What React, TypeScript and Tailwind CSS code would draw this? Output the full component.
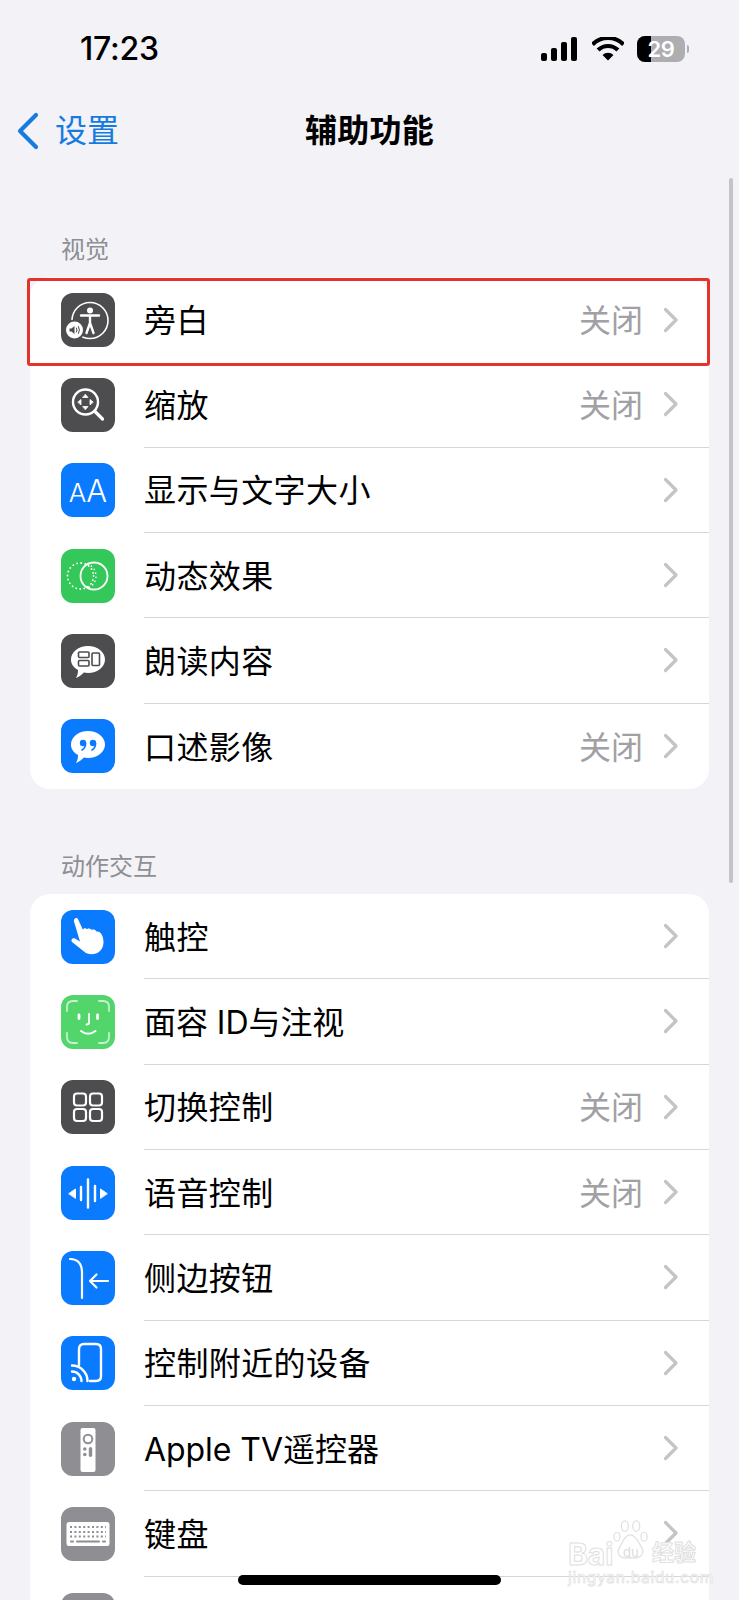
import type { ReactNode } from "react";

const cjk = "font-['Inter','Noto_Sans_CJK_SC',sans-serif]";

function Glyph({ children, bg }: { children: ReactNode; bg: string }) {
	return (
		<div className={`w-[54px] h-[54px] rounded-[12px] shrink-0 flex items-center justify-center ${bg}`}>
			{children}
		</div>
	);
}

function Svg({ children }: { children: ReactNode }) {
	return (
		<svg width="54" height="54" viewBox="0 0 54 54" fill="none" stroke="white" strokeLinecap="round" strokeLinejoin="round">
			{children}
		</svg>
	);
}

const VoiceOverIcon = () => (
	<Svg>
		<circle cx="29" cy="27.5" r="18" strokeWidth="1.6" />
		<circle cx="29" cy="17.5" r="3" fill="white" stroke="none" />
		<path d="M20 22.5 L38 22.5 M29 23 L29 30 M29 30 L25.5 40 M29 30 L32.5 40" strokeWidth="2.4" />
		<circle cx="13.5" cy="37" r="10.5" fill="#4d4d4f" stroke="none" />
		<circle cx="13.5" cy="37" r="8.5" fill="white" stroke="none" />
		<path d="M8.5 35.5 h2 l3 -2.5 v8 l-3 -2.5 h-2 z" fill="#4d4d4f" stroke="none" />
		<path d="M15.5 35 q1.2 2 0 4 M17.5 33.5 q2 3.5 0 7" stroke="#4d4d4f" strokeWidth="1" />
	</Svg>
);

const ZoomIcon = () => (
	<Svg>
		<circle cx="24.5" cy="24" r="12.5" strokeWidth="2.4" />
		<path d="M34 33.5 L41.5 41" strokeWidth="3.2" />
		<path d="M24.5 16.5 l2.5 3 h-5 z M24.5 31.5 l2.5 -3 h-5 z M17 24 l3 -2.5 v5 z M32 24 l-3 -2.5 v5 z" fill="white" stroke="white" strokeWidth="0.8" />
	</Svg>
);

const MotionIcon = () => (
	<Svg>
		<circle cx="19.5" cy="27" r="13" strokeWidth="1.8" strokeDasharray="0.1 4" />
		<circle cx="33" cy="27" r="13.5" strokeWidth="1.8" />
		<path d="M27 15 A13 13 0 0 1 27 39" strokeWidth="1.6" strokeDasharray="0.1 4" />
	</Svg>
);

const bubble =
	"M27 12 C36.5 12 44 18 44 25.5 C44 33 36.5 39 27 39 C25.5 39 24 38.8 22.8 38.5 C20.5 41 18 43 15 44 C16.5 41.5 17 39 17 36 C12.5 33.5 10 30 10 25.5 C10 18 17.5 12 27 12 Z";

const SpeakIcon = () => (
	<Svg>
		<path d={bubble} fill="white" stroke="none" />
		<rect x="17.5" y="18" width="10.5" height="5.5" rx="1" stroke="#4d4d4f" strokeWidth="1.6" />
		<rect x="17.5" y="26.5" width="10.5" height="5.5" rx="1" stroke="#4d4d4f" strokeWidth="1.6" />
		<rect x="31" y="19" width="7.5" height="12.5" rx="1" stroke="#4d4d4f" strokeWidth="1.6" />
	</Svg>
);

const AudioDescIcon = () => (
	<Svg>
		<path d={bubble} fill="white" stroke="none" />
		<circle cx="22" cy="24" r="3.2" fill="#0a7aff" stroke="none" />
		<circle cx="32" cy="24" r="3.2" fill="#0a7aff" stroke="none" />
		<path d="M24.6 24.5 Q24.5 29 21 31 M34.6 24.5 Q34.5 29 31 31" stroke="#0a7aff" strokeWidth="1.6" />
	</Svg>
);

const TouchIcon = () => (
	<Svg>
		<path
			d="M13.5 9 C15 7.5 16.5 8 17.2 9.5 L22 20 C22 18 25 17.5 26 19.5 C26.5 18 29.5 18 30.5 20 C31.5 19 34.5 19.5 35.5 21.5 C37 21 39.5 22 41 25 C43.5 31 43 37 39 41 C35 45 27 45.5 23 41.5 L11 32 C9.5 30 11.5 27.5 14 28.5 L19 31.5 L13 11.5 C12.8 10.5 13 9.5 13.5 9 Z"
			fill="white"
			stroke="none"
		/>
	</Svg>
);

const FaceIdIcon = () => (
	<Svg>
		<g stroke="#c6f2d0" strokeWidth="1.8">
			<path d="M6 16 V12 Q6 6 12 6 H16 M38 6 H42 Q48 6 48 12 V16 M6 38 V42 Q6 48 12 48 H16 M48 38 V42 Q48 48 42 48 H38" />
		</g>
		<path d="M18 20 V23.5 M36.5 20 V23.5" strokeWidth="2.8" />
		<path d="M28 19 V27.5 Q28 29.5 25.5 29.5" strokeWidth="1.8" />
		<path d="M20 36 Q27 41.5 34.5 36" strokeWidth="2" />
	</Svg>
);

const SwitchIcon = () => (
	<Svg>
		<rect x="13" y="13.5" width="12" height="12" rx="3" strokeWidth="2.2" />
		<rect x="29" y="13.5" width="12" height="12" rx="3" strokeWidth="2.2" />
		<rect x="13" y="29" width="12" height="12" rx="3" strokeWidth="2.2" />
		<rect x="29" y="29" width="12" height="12" rx="3" strokeWidth="2.2" />
	</Svg>
);

const VoiceIcon = () => (
	<Svg>
		<path d="M8 27.5 L14.5 23 V32 Z M46 27.5 L39.5 23 V32 Z" fill="white" stroke="white" strokeWidth="1" />
		<path d="M20 21 V34 M27 13.5 V41.5 M34 20 V35" strokeWidth="2.4" />
	</Svg>
);

const SideButtonIcon = () => (
	<Svg>
		<path d="M9 8 Q21 8 21 22 V47" strokeWidth="2.2" />
		<path d="M47 30 H29 M35.5 23.5 L29 30 L35.5 36.5" strokeWidth="2.2" />
	</Svg>
);

const NearbyIcon = () => (
	<Svg>
		<path d="M18 29 V13 Q18 8 23 8 H35 Q40 8 40 13 V40 Q40 45 35 45 H29" strokeWidth="2.4" />
		<circle cx="13" cy="43" r="2.2" fill="white" stroke="none" />
		<path d="M11 35.5 A9.5 9.5 0 0 1 20.5 45 M11 29.5 A15.5 15.5 0 0 1 26.5 45" strokeWidth="2.4" />
	</Svg>
);

const RemoteIcon = () => (
	<Svg>
		<rect x="19.5" y="6" width="15" height="44" rx="2" fill="white" stroke="none" />
		<circle cx="27" cy="17" r="4.3" stroke="#8e8e93" strokeWidth="2" />
		<circle cx="23.8" cy="27" r="1.8" fill="#8e8e93" stroke="none" />
		<circle cx="23.8" cy="32.5" r="1.8" fill="#8e8e93" stroke="none" />
		<rect x="27.8" y="25" width="3.4" height="10" rx="1.7" fill="#8e8e93" stroke="none" />
	</Svg>
);

const KeyboardIcon = () => (
	<Svg>
		<rect x="5.5" y="15" width="43" height="24" rx="2.5" fill="white" stroke="none" />
		<g stroke="#8e8e93" strokeWidth="2" strokeDasharray="2 2.4" strokeLinecap="butt">
			<path d="M9 20 H45 M9 25 H45 M9 29.5 H45" />
		</g>
		<path d="M10 34.5 H12 M16 34.5 H38 M42 34.5 H44" stroke="#8e8e93" strokeWidth="2" />
	</Svg>
);

type Row = { icon: ReactNode; bg: string; label: string; value?: string; noLine?: boolean; tight?: boolean };

const visual: Row[] = [
	{ icon: <VoiceOverIcon />, bg: "bg-[#4d4d4f]", label: "旁白", value: "关闭", noLine: true },
	{ icon: <ZoomIcon />, bg: "bg-[#4d4d4f]", label: "缩放", value: "关闭" },
	{
		icon: (
			<div className="flex items-baseline text-white font-['Inter',sans-serif] font-light leading-none">
				<span className="text-[26px]">A</span>
				<span className="text-[31px]">A</span>
			</div>
		),
		bg: "bg-[#0a7aff]",
		label: "显示与文字大小",
	},
	{ icon: <MotionIcon />, bg: "bg-[#34c759]", label: "动态效果" },
	{ icon: <SpeakIcon />, bg: "bg-[#4d4d4f]", label: "朗读内容" },
	{ icon: <AudioDescIcon />, bg: "bg-[#0a7aff]", label: "口述影像", value: "关闭", noLine: true },
];

const interaction: Row[] = [
	{ icon: <TouchIcon />, bg: "bg-[#0a7aff]", label: "触控" },
	{ icon: <FaceIdIcon />, bg: "bg-[#52d66b]", label: "面容 ID与注视", tight: true },
	{ icon: <SwitchIcon />, bg: "bg-[#4d4d4f]", label: "切换控制", value: "关闭" },
	{ icon: <VoiceIcon />, bg: "bg-[#0a7aff]", label: "语音控制", value: "关闭" },
	{ icon: <SideButtonIcon />, bg: "bg-[#0a7aff]", label: "侧边按钮" },
	{ icon: <NearbyIcon />, bg: "bg-[#0a7aff]", label: "控制附近的设备" },
	{ icon: <RemoteIcon />, bg: "bg-[#8e8e93]", label: "Apple TV遥控器", tight: true },
	{ icon: <KeyboardIcon />, bg: "bg-[#8e8e93]", label: "键盘" },
];

function Chevron() {
	return (
		<svg width="16" height="26" viewBox="0 0 16 26" fill="none" stroke="#c4c4c7" strokeWidth="3.2" strokeLinecap="round" strokeLinejoin="round">
			<path d="M2.5 2.5 L13 13 L2.5 23.5" />
		</svg>
	);
}

function SettingRow({ row }: { row: Row }) {
	return (
		<div className="h-[85.33px] flex items-center pl-[31px]">
			<Glyph bg={row.bg}>{row.icon}</Glyph>
			<div className={`ml-[29px] flex-1 h-full flex items-center pr-[30px] ${row.noLine ? "" : "border-b border-[#d6d6d8]"}`}>
				<span className={`flex-1 pt-[3px] text-[32px] text-black ${row.tight ? "tracking-[-0.05px]" : "tracking-[0.4px]"}`}>{row.label}</span>
				{row.value && <span className="pt-[3px] text-[32px] text-[#a0a0a5] mr-[20px]">{row.value}</span>}
				<Chevron />
			</div>
		</div>
	);
}

function Section({ title, rows, more }: { title: string; rows: Row[]; more?: boolean }) {
	return (
		<section>
			<h2 className="pl-[61px] h-[34px] text-[24px] leading-[30px] text-[#8e8e93] font-normal">{title}</h2>
			<div className="mt-[8px] mx-[30px] bg-white rounded-[20px] overflow-hidden">
				{rows.map((row) => (
					<SettingRow key={row.label} row={row} />
				))}
				{more && (
					<div className="h-[85.33px] pl-[31px] pt-[16px]">
						<div className="w-[54px] h-[54px] rounded-[12px] bg-[#8e8e93]" />
					</div>
				)}
			</div>
		</section>
	);
}

function StatusIcons() {
	return (
		<div className="flex items-center">
			<svg width="36" height="24" viewBox="0 0 36 24" fill="black">
				<rect x="0" y="16" width="6" height="8" rx="2" />
				<rect x="10" y="11" width="6" height="13" rx="2" />
				<rect x="20" y="5" width="6" height="19" rx="2" />
				<rect x="30" y="0" width="6" height="24" rx="2" />
			</svg>
			<svg className="ml-[15px]" width="32" height="24" viewBox="0 0 32 24" fill="none" stroke="black" strokeWidth="4.2">
				<path d="M0.44 7.44 A22 22 0 0 1 31.56 7.44" />
				<path d="M6.1 13.1 A14 14 0 0 1 25.9 13.1" />
				<path d="M16 23.5 L10.5 18 A7.8 7.8 0 0 1 21.5 18 Z" fill="black" stroke="none" />
			</svg>
			<div className="ml-[13px] relative w-[48px] h-[26px] rounded-[8px] bg-[#aeaeb2] overflow-hidden flex items-center justify-center">
				<div className="absolute left-0 top-0 bottom-0 w-[14px] bg-black" />
				<span className="relative text-white font-semibold text-[22px] leading-none tracking-[-0.5px]">29</span>
			</div>
			<div className="ml-[2px] w-[2px] h-[8px] rounded-r bg-[#aeaeb2]" />
		</div>
	);
}

function Watermark() {
	return (
		<div className="absolute left-[568px] top-[1520px] w-[131px] h-[64px] pointer-events-none">
			<svg className="absolute left-[44px] top-0" width="38" height="42" viewBox="0 0 42 48" fill="white" stroke="#e0e0e2" strokeWidth="1.4">
				<ellipse cx="5" cy="19" rx="3.5" ry="5" />
				<ellipse cx="14" cy="7" rx="4" ry="6" />
				<ellipse cx="27" cy="7" rx="4" ry="6" />
				<ellipse cx="36" cy="19" rx="3.5" ry="5" />
				<path d="M20 17 C27 17 30 27 33 31 C38 40 30 45 20 43 C10 45 3 40 8 31 C11 27 13 17 20 17 Z" />
			</svg>
			<span className="absolute left-0 top-[19px] text-[30px] leading-none font-bold text-white [-webkit-text-stroke:1px_#e0e0e2] font-['Inter',sans-serif]">Bai</span>
			<span className="absolute left-[55px] top-[26px] text-[13px] leading-none text-[#dcdcde] font-['Inter',sans-serif]">du</span>
			<span className="absolute left-[84px] top-[21px] text-[22px] leading-none font-bold text-white [-webkit-text-stroke:1px_#e0e0e2]">经验</span>
			<span className="absolute left-0 top-[50px] text-[15.5px] leading-none tracking-[0.7px] text-white [-webkit-text-stroke:0.7px_#e0e0e2] font-['Inter',sans-serif]">jingyan.baidu.com</span>
		</div>
	);
}

export default function App() {
	return (
		<div className={`relative w-[739px] h-[1600px] overflow-hidden bg-[#f2f2f7] ${cjk}`}>
			<div className="h-[98px] pl-[80px] pr-[50px] flex items-center justify-between">
				<span className="text-[32px] font-medium tracking-[-0.2px] text-black font-['Inter',sans-serif]">17:23</span>
				<StatusIcons />
			</div>

			<div className="h-[66px] relative flex items-center justify-center">
				<div className="absolute left-[17px] top-0 bottom-0 flex items-center text-[#167bdf]">
					<svg width="22" height="38" viewBox="0 0 22 38" fill="none" stroke="currentColor" strokeWidth="4.2" strokeLinecap="round" strokeLinejoin="round">
						<path d="M19 3 L3 19 L19 35" />
					</svg>
					<span className="ml-[16px] text-[32px]">设置</span>
				</div>
				<span className="text-[32px] font-semibold tracking-[0.3px] text-black">辅助功能</span>
			</div>

			<div className="pt-[71px]">
				<Section title="视觉" rows={visual} />
				<div className="h-[63px]" />
				<Section title="动作交互" rows={interaction} more />
			</div>

			{/* red highlight box drawn over the first row */}
			<div className="absolute left-[27px] top-[278px] w-[683px] h-[88px] border-[3px] border-[#e5322a] rounded-[3px]" />
			{/* scroll indicator */}
			<div className="absolute left-[729px] top-[178px] w-[4px] h-[705px] rounded-full bg-[#c4c4c8]" />
			<Watermark />
			<div className="absolute left-[238px] top-[1575px] w-[263px] h-[10px] rounded-full bg-black" />
		</div>
	);
}
